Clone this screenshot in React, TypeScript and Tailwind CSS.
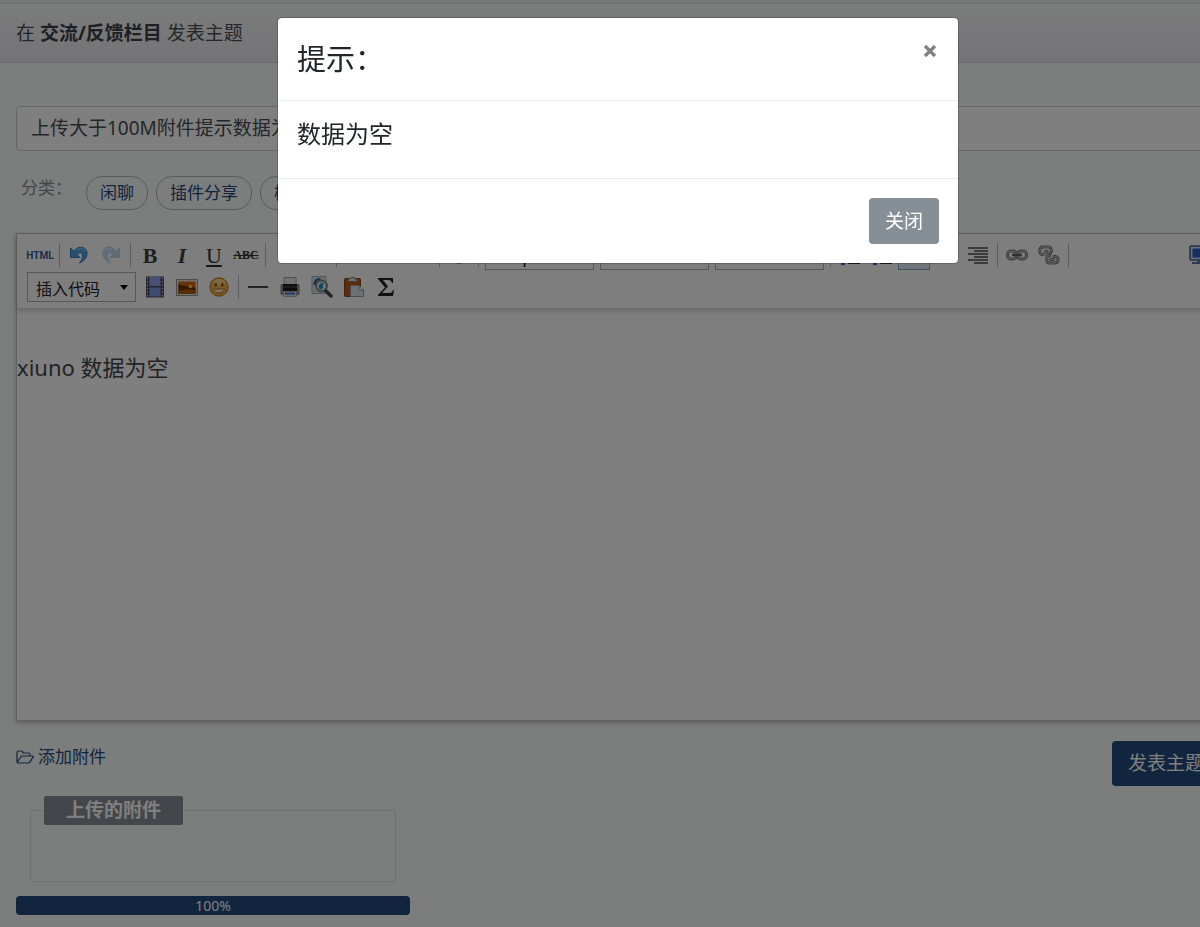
import type { ReactNode } from 'react';

function Tool({ label, active, children }: { label: string; active?: boolean; children?: ReactNode }) {
  return (
    <button
      type="button"
      aria-label={label}
      className={
        active
          ? 'flex h-[30px] w-8 shrink-0 items-center justify-center border border-[#8aa4d0] bg-[#e2ebfa]'
          : 'flex h-[30px] w-8 shrink-0 items-center justify-center'
      }
    >
      {children}
    </button>
  );
}

function Separator() {
  return (
    <span className="flex h-6 w-[7px] shrink-0 justify-center">
      <span className="w-px bg-[#b8b8b8]" />
    </span>
  );
}

function ToolSelect({ label, value, center }: { label: string; value: string; center?: boolean }) {
  return (
    <span className="relative mx-[3px] flex h-[30px] w-[109px] shrink-0 items-center">
      <select
        aria-label={label}
        className={
          center
            ? 'h-full w-full appearance-none border border-[#b0b0b0] bg-[#fcfcfc] pt-1 pr-6 text-center text-base leading-6 text-black'
            : 'h-full w-full appearance-none border border-[#b0b0b0] bg-[#fcfcfc] pt-1 pl-2 text-base leading-6 text-[#1c1c1c]'
        }
      >
        <option>{value}</option>
      </select>
      <svg className="pointer-events-none absolute right-2 h-[5px] w-2" viewBox="0 0 8 5" aria-hidden="true">
        <path d="M0 0H8L4 5Z" fill="#000" />
      </svg>
    </span>
  );
}

function UndoArrow() {
  return (
    <svg className="h-5 w-5" viewBox="0 0 20 20" aria-hidden="true">
      <path d="M1.500 3V12.500H11L8 9.500C10.500 6.500 13.800 7.500 13.600 11C13.500 13.500 12.200 15.500 10.500 18C15.500 16 18.300 12 18 8C17.500 1.500 10 0.500 6.500 4.500L5 6.300Z" fill="#529de0" stroke="#3b82c0" strokeWidth="1" />
      <path d="M8 5C11 2.500 14.500 3 16 6.500" fill="none" stroke="#8cc7f5" strokeWidth="1.200" />
    </svg>
  );
}

function Lines({ align }: { align: 'left' | 'center' | 'right' }) {
  const paths = {
    left: 'M0 1H20M0 4H13M0 7H20M0 10H13M0 13H20M0 16H13',
    center: 'M0 1H20M3 4H17M0 7H20M3 10H17M0 13H20M3 16H17',
    right: 'M0 1H20M6 4H20M0 7H20M6 10H20M0 13H20M6 16H20',
  };
  return (
    <svg className="h-[17px] w-5" viewBox="0 0 20 17" aria-hidden="true">
      <path d={paths[align]} stroke="#4a4a4a" strokeWidth="1.600" />
    </svg>
  );
}

function ListLines() {
  return (
    <svg className="h-5 w-5" viewBox="0 0 20 20" aria-hidden="true">
      <path d="M8 4H20M8 10H20M8 18H20" stroke="#333" strokeWidth="2" />
      <path d="M2 3H4V8M1 13H4V19H1" fill="none" stroke="#2b66d8" strokeWidth="2" />
    </svg>
  );
}

function LinkIcon() {
  return (
    <svg className="h-3 w-[22px]" viewBox="0 0 22 12" aria-hidden="true">
      <g fill="none" stroke="#7c7c7c" strokeWidth="3">
        <rect x="1.500" y="2" width="9" height="8" rx="3.500" />
        <rect x="11.500" y="2" width="9" height="8" rx="3.500" />
      </g>
      <g fill="none" stroke="#c4c4c4" strokeWidth="1">
        <rect x="1.500" y="2" width="9" height="8" rx="3.500" />
        <rect x="11.500" y="2" width="9" height="8" rx="3.500" />
      </g>
      <path d="M6 6H16" stroke="#5e5e5e" strokeWidth="2.500" />
    </svg>
  );
}

function UnlinkIcon() {
  const links = 'M5 9.500H4C1 9.500 1 2 4.500 2H10C14 2 14 6.500 12.500 8M7 6.500H9V12M12 10.500C8 10 7.500 18 11 18H17C21 18 21 11.500 17.500 11.500H16M12.500 14.500H15.500';
  return (
    <svg className="h-5 w-[22px]" viewBox="0 0 22 20" aria-hidden="true">
      <path d={links} fill="none" stroke="#7c7c7c" strokeWidth="3" strokeLinecap="round" />
      <path d={links} fill="none" stroke="#c8c8c8" strokeWidth="1" strokeLinecap="round" />
    </svg>
  );
}

function ScreenIcon() {
  return (
    <svg className="h-5 w-[22px]" viewBox="0 0 22 20" aria-hidden="true">
      <rect x="1" y="1" width="20" height="14" rx="1" fill="#cfdcf2" stroke="#43608f" strokeWidth="1.500" />
      <rect x="3.500" y="3.500" width="15" height="9" fill="#2f5fcb" />
      <path d="M8 15H14V17H17V19H3V17H8Z" fill="#5c77a6" />
    </svg>
  );
}

function FilmIcon() {
  return (
    <svg className="h-[22px] w-5" viewBox="0 0 20 22" aria-hidden="true">
      <rect x="1" y="0.500" width="18" height="21" fill="#4b4f5c" />
      <rect x="4.500" y="1" width="11" height="9" fill="#8da3e8" />
      <rect x="4.500" y="11.500" width="11" height="9" fill="#7f98e4" />
      <path d="M2.500 1.500V21M17.500 1.500V21" stroke="#c9c9c9" strokeWidth="1.200" strokeDasharray="1.500 2" />
    </svg>
  );
}

function PictureIcon() {
  return (
    <svg className="h-[17px] w-[22px]" viewBox="0 0 22 17" aria-hidden="true">
      <rect x="0.500" y="0.500" width="21" height="16" fill="#dedede" stroke="#999" />
      <rect x="2.500" y="2.500" width="17" height="12" fill="#d16a08" />
      <path d="M2.500 5L7 7L10 6.500L12 8L19.500 8.500V14.500H2.500Z" fill="#713007" />
      <path d="M2.500 11.500L12 10L19.500 11.500V14.500H2.500Z" fill="#b05a0c" />
      <circle cx="14.500" cy="7.500" r="1.800" fill="#ffc14c" />
    </svg>
  );
}

function SmileIcon() {
  return (
    <svg className="h-5 w-5" viewBox="0 0 20 20" aria-hidden="true">
      <circle cx="10" cy="10" r="9" fill="#f3b551" stroke="#cb7f26" strokeWidth="1.300" />
      <ellipse cx="10" cy="5" rx="6" ry="3" fill="#fbd488" />
      <rect x="5.500" y="6" width="2.500" height="3.500" rx="1" fill="#8f561d" />
      <rect x="12" y="6" width="2.500" height="3.500" rx="1" fill="#8f561d" />
      <path d="M4.500 12H15.500C15 14.800 13 16 10 16S5 14.800 4.500 12Z" fill="#ffe9c4" stroke="#b56f25" strokeWidth="1" />
    </svg>
  );
}

function PrinterIcon() {
  return (
    <svg className="h-5 w-5" viewBox="0 0 20 20" aria-hidden="true">
      <path d="M4 8V0.500H16V8" fill="#e5e5e5" stroke="#a5a5a5" />
      <rect x="0.500" y="7" width="19" height="11" rx="1.500" fill="#8a8a8a" />
      <path d="M3 7H17V14H3Z" fill="#1d1d1d" />
      <path d="M3 10H17" stroke="#555" />
      <path d="M3.500 14.500H16.500V19.500H3.500Z" fill="#ddd" stroke="#aaa" />
      <path d="M5 16.500H15" stroke="#3970dc" strokeWidth="2" />
    </svg>
  );
}

function PreviewIcon() {
  return (
    <svg className="h-[22px] w-[22px]" viewBox="0 0 22 22" aria-hidden="true">
      <path d="M1 0.500H15V17.500H1Z" fill="#dde3e9" stroke="#9faeb9" />
      <path d="M3.500 9C3.500 5 6 3 9.500 3" fill="none" stroke="#3d668d" strokeWidth="2.500" />
      <circle cx="10.500" cy="10" r="5.500" fill="#cceaf5" stroke="#7b858d" strokeWidth="1.800" />
      <path d="M8 12.500C7 9 10 6 13 7.500L11.500 9L12 12L9.500 13.500Z" fill="#268aa4" />
      <path d="M15 15L20 20" stroke="#484848" strokeWidth="3.500" strokeLinecap="round" />
    </svg>
  );
}

function PasteIcon() {
  return (
    <svg className="h-5 w-5" viewBox="0 0 20 20" aria-hidden="true">
      <rect x="0.500" y="1.500" width="16" height="18" rx="1" fill="#b9591b" stroke="#8b4210" />
      <path d="M4 4.500V2H6L7 0.500H10L11 2H13V4.500Z" fill="#ddd" stroke="#7d7d7d" />
      <path d="M6.500 8.500H15L19.500 13V19.500H6.500Z" fill="#dce2e9" stroke="#929ca5" />
      <path d="M15 8.500V13H19.500" fill="#f5f5f5" stroke="#929ca5" />
    </svg>
  );
}

function FolderIcon() {
  return (
    <svg className="h-4 w-[18px] shrink-0" viewBox="0 0 18 16" aria-hidden="true">
      <path d="M1 13V3.500C1 2.500 1.500 2 2.500 2H5.500C6.500 2 7 2.500 7 3.500V4H12.500C13.500 4 14 4.500 14 5.500V7M1.300 13.200L4.500 8.200C5 7.400 5.600 7 6.500 7H16.500C17.300 7 17.500 7.500 17 8.200L14 12.800C13.500 13.600 13 14 12 14H2C1.300 14 1 13.700 1.300 13.200Z" fill="none" stroke="#24487e" strokeWidth="1.200" />
    </svg>
  );
}

function Toolbar() {
  return (
    <div className="relative border-b border-[#dcdcdc] bg-[#fcfcfc] pt-[5px] pr-[3px] pb-[5px] pl-[7px] shadow-[0_2px_5px_rgba(0,0,0,0.2)]">
      <div className="flex h-8 items-center">
        <Tool label="HTML">
          <span className="font-['Roboto',sans-serif] text-[10px] font-bold text-[#315f91]">HTML</span>
        </Tool>
        <Separator />
        <Tool label="撤销"><UndoArrow /></Tool>
        <Tool label="重做"><span className="-scale-x-100 opacity-35"><UndoArrow /></span></Tool>
        <Separator />
        <Tool label="加粗"><span className="font-['Liberation_Serif',serif] text-[22px] font-bold text-[#404040]">B</span></Tool>
        <Tool label="斜体"><span className="font-['Liberation_Serif',serif] text-[22px] font-bold text-[#404040] italic">I</span></Tool>
        <Tool label="下划线"><span className="font-['Liberation_Serif',serif] text-[22px] text-[#303030] underline decoration-2 underline-offset-2">U</span></Tool>
        <Tool label="删除线"><span className="font-['Liberation_Serif',serif] text-[12px] font-bold text-[#333] line-through">ABC</span></Tool>
        <Separator />
        <Tool label="文字颜色" />
        <Tool label="背景颜色" />
        <Separator />
        <Tool label="上标" />
        <Tool label="下标" />
        <Tool label="清除格式" />
        <Separator />
        <Tool label="引用">
          <svg className="h-5 w-5" viewBox="0 0 20 20" aria-hidden="true">
            <circle cx="10" cy="14" r="5" fill="#8c8c8c" />
          </svg>
        </Tool>
        <Separator />
        <ToolSelect label="段落" value="p" center />
        <ToolSelect label="字体" value="sans-m" center />
        <ToolSelect label="字号" value="16" center />
        <Separator />
        <Tool label="有序列表"><ListLines /></Tool>
        <Tool label="无序列表"><ListLines /></Tool>
        <Tool label="左对齐" active />
        <Tool label="居中" />
        <Tool label="右对齐"><Lines align="right" /></Tool>
        <Separator />
        <Tool label="链接"><LinkIcon /></Tool>
        <Tool label="取消链接"><UnlinkIcon /></Tool>
        <Separator />
        <span className="ml-auto"><Tool label="全屏"><ScreenIcon /></Tool></span>
      </div>
      <div className="flex h-8 items-center">
        <ToolSelect label="代码语言" value="插入代码" />
        <Tool label="视频"><FilmIcon /></Tool>
        <Tool label="图片"><PictureIcon /></Tool>
        <Tool label="表情"><SmileIcon /></Tool>
        <Separator />
        <Tool label="分隔线"><span className="h-0.5 w-5 bg-[#444]" /></Tool>
        <Tool label="打印"><PrinterIcon /></Tool>
        <Tool label="预览"><PreviewIcon /></Tool>
        <Tool label="粘贴"><PasteIcon /></Tool>
        <Tool label="公式">
          <svg className="h-[18px] w-4" viewBox="0 0 16 18" aria-hidden="true">
            <path d="M0 0H15V5H14C13.500 3 12.500 2 10 2H5L10 8.500L4 15H11C13.500 15 14.500 14 15 12H16L15 18H0V17L7 9.500L0 1Z" fill="#242424" />
          </svg>
        </Tool>
      </div>
    </div>
  );
}

function NewThread() {
  return (
    <main className="-mr-9">
      <div className="h-1 border-b border-[#dcdee0] bg-[#eeeff1]" />
      <header className="border-b border-[#d8dade] bg-linear-to-b from-[#f8f9fa] to-[#e8e8ec] px-4">
        <h1 className="text-[19px] leading-[58px] text-[#4a4e54]">
          在 <b className="text-[#3c4046]">交流/反馈栏目</b> 发表主题
        </h1>
      </header>
      <form className="px-4 pt-[43px]">
        <input
          aria-label="标题"
          defaultValue="上传大于100M附件提示数据为空"
          className="block h-[45px] w-full rounded border border-[#c8ccd2] bg-white px-[14px] pb-1 text-[19px] text-[#4a4e54]"
        />
        <div className="mt-[25px] flex gap-2">
          <span className="w-[62px] shrink-0 pl-[5px] text-[17px] leading-6 text-[#868e96]">分类：</span>
          {['闲聊', '插件分享', '模板分享'].map((tag) => (
            <button key={tag} type="button" className="h-[34px] rounded-2xl border border-[#b4b6b8] px-[13px] text-[17px] leading-8 text-[#24487e]">
              {tag}
            </button>
          ))}
        </div>
        <section className="mt-[23px] border border-[#c4c4c4] shadow-[0_2px_5px_rgba(0,0,0,0.25)]">
          <Toolbar />
          <textarea
            aria-label="内容"
            defaultValue="xiuno 数据为空"
            className="block h-[411px] w-full resize-none bg-white pt-10 text-[22px] leading-9 text-[#45494e]"
          />
        </section>
        <div className="mt-5 flex items-start justify-between">
          <a href="#attach" className="flex items-center gap-1 text-[17px] leading-8 text-[#24487e]">
            <FolderIcon />
            添加附件
          </a>
          <button type="submit" className="h-[45px] rounded bg-[#224a7c] px-4 text-[19px] text-white">
            发表主题
          </button>
        </div>
        <div className="mt-[10px] w-[394px]">
          <fieldset className="mx-[14px] h-[86px] rounded-xs border border-[#dfe1e1] px-[13px]">
            <legend className="rounded-xs bg-[#868e96] px-[22px] text-[19px] leading-[29px] font-bold text-white">上传的附件</legend>
          </fieldset>
          <div role="progressbar" aria-valuenow={100} aria-label="上传进度" className="mt-[14px] rounded bg-[#224a7c] text-center text-sm leading-[19px] text-white">
            100%
          </div>
        </div>
      </form>
    </main>
  );
}

function Notice() {
  return (
    <div className="fixed inset-y-0 -right-9 left-0 flex items-start justify-center bg-black/50 pt-[18px]">
      <div role="dialog" aria-modal="true" aria-labelledby="notice-title" className="w-full max-w-[680px] rounded bg-white text-[#212529] shadow-[0_0_0_1px_rgba(0,0,0,0.2)]">
        <div className="flex items-start justify-between border-b border-[#e9ecef] px-[19px] pt-5 pb-5">
          <h2 id="notice-title" className="text-[29px] leading-[42px]">提示：</h2>
          <button type="button" aria-label="关闭提示" className="flex h-[26px] w-[18px] items-center justify-center">
            <svg className="h-[14px] w-[14px]" viewBox="0 0 14 14" aria-hidden="true">
              <path d="M2 2L12 12M12 2L2 12" stroke="#808080" strokeWidth="3.200" />
            </svg>
          </button>
        </div>
        <p className="px-[19px] pt-[15px] pb-[26px] text-2xl leading-9">数据为空</p>
        <div className="flex justify-end border-t border-[#e9ecef] p-[19px]">
          <button type="button" className="h-[46px] rounded bg-[#868e96] px-4 text-[19px] text-white">关闭</button>
        </div>
      </div>
    </div>
  );
}

export default function App() {
  return (
    <div className="min-h-screen overflow-x-hidden bg-[#f9fcfa] pb-3 font-['Noto_Sans','Noto_Sans_CJK_SC',sans-serif]">
      <NewThread />
      <Notice />
    </div>
  );
}
